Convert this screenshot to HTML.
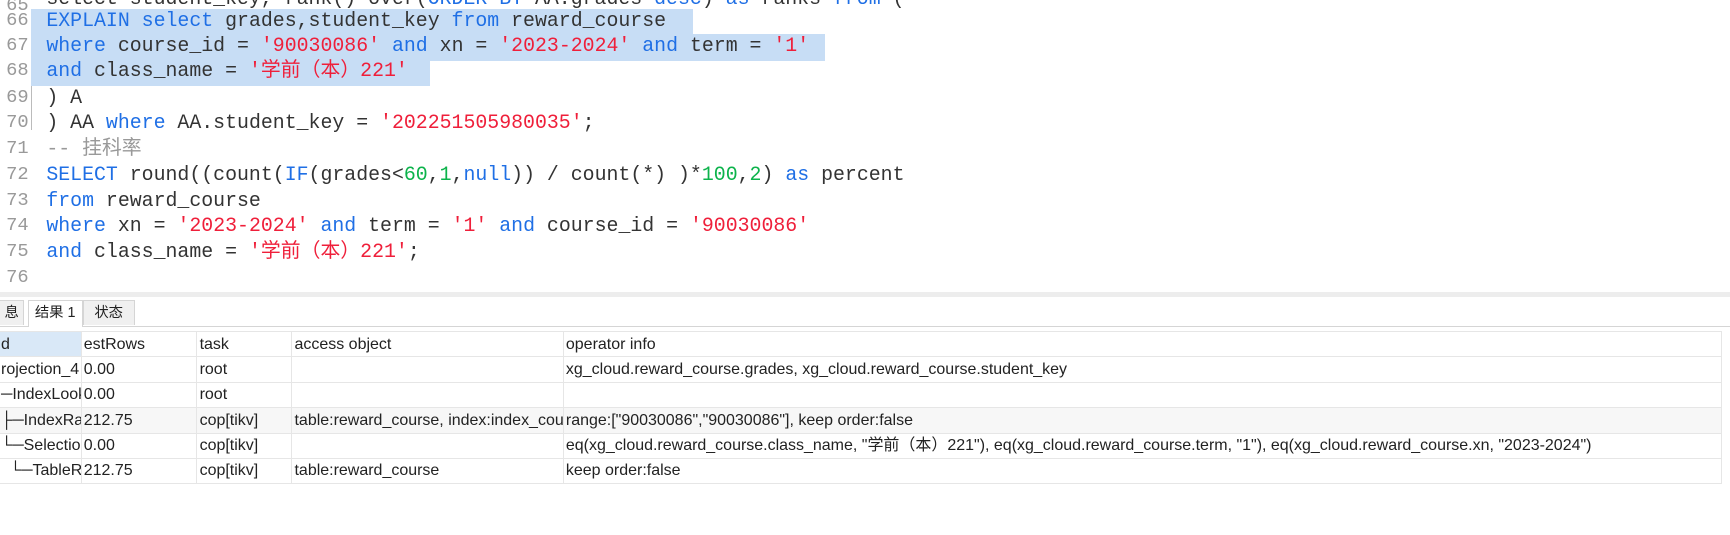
<!DOCTYPE html>
<html><head><meta charset="utf-8"><style>
body{margin:0;width:1730px;height:535px;background:#fff;overflow:hidden;position:relative;font-family:"Liberation Sans","Noto Sans CJK SC",sans-serif}
#w{position:absolute;left:0;top:0;width:1568px;height:485px;zoom:1.1034;overflow:hidden}
.code{position:absolute;left:0;top:0;width:1568px;height:265px}
.ln{position:absolute;left:0;width:26px;text-align:right;color:#999;font:17px/23.3px "Liberation Mono","Noto Sans CJK SC",monospace}
.cl{position:absolute;left:42px;white-space:pre;color:#333;font:18px/23.3px "Liberation Mono","Noto Sans CJK SC",monospace}
.hl{position:absolute;background:#c7ddf5}
.k{color:#1f6fe5}.s{color:#ef1f3a}.n{color:#0cb34b}.c{color:#999}
.sep{position:absolute;left:0;top:265px;width:1568px;height:4px;background:#ededed}
.tab{position:absolute;top:272px;height:23px;font-size:13px;line-height:23px;color:#222;text-align:center;border:1px solid #d5d5d5;border-bottom:none;box-sizing:border-box}
.tl{position:absolute;left:0;top:295px;width:1568px;height:1px;background:#d5d5d5}
table{position:absolute;left:-2px;top:300px;width:1562px;border-collapse:collapse;font-size:14.5px;color:#222;table-layout:fixed}
td{height:23px;line-height:21px;border:1px solid #e6e6e6;padding:0 0 0 2px;white-space:nowrap;overflow:hidden;box-sizing:border-box}
tr.g td{background:#f7f7f7}
</style></head><body><div id="w">
<div class="code">
<div class="hl" style="left:28px;top:8px;width:600px;height:23px"></div>
<div class="hl" style="left:28px;top:31px;width:720px;height:24px"></div>
<div class="hl" style="left:28px;top:55px;width:362px;height:23px"></div>
<div style="position:absolute;left:28px;top:78px;width:1px;height:40px;background:#bbb"></div>
<div class="ln" style="top:-6px">65</div>
<div class="ln" style="top:7px">66</div>
<div class="ln" style="top:30px">67</div>
<div class="ln" style="top:53px">68</div>
<div class="ln" style="top:77px">69</div>
<div class="ln" style="top:100px">70</div>
<div class="ln" style="top:123px">71</div>
<div class="ln" style="top:147px">72</div>
<div class="ln" style="top:170px">73</div>
<div class="ln" style="top:193px">74</div>
<div class="ln" style="top:217px">75</div>
<div class="ln" style="top:240px">76</div>
<div class="cl" style="top:-13px">select student_key, rank() over(<span class="k">ORDER BY</span> AA.grades <span class="k">desc</span>) <span class="k">as</span> ranks <span class="k">from</span> (</div>
<div class="cl" style="top:7px"><span class="k">EXPLAIN select</span> grades,student_key <span class="k">from</span> reward_course</div>
<div class="cl" style="top:30px"><span class="k">where</span> course_id = <span class="s">'90030086'</span> <span class="k">and</span> xn = <span class="s">'2023-2024'</span> <span class="k">and</span> term = <span class="s">'1'</span></div>
<div class="cl" style="top:53px"><span class="k">and</span> class_name = <span class="s">'学前（本）221'</span></div>
<div class="cl" style="top:77px">) A</div>
<div class="cl" style="top:100px">) AA <span class="k">where</span> AA.student_key = <span class="s">'202251505980035'</span>;</div>
<div class="cl" style="top:123px"><span class="c">-- 挂科率</span></div>
<div class="cl" style="top:147px"><span class="k">SELECT</span> round((count(<span class="k">IF</span>(grades&lt;<span class="n">60</span>,<span class="n">1</span>,<span class="k">null</span>)) / count(*) )*<span class="n">100</span>,<span class="n">2</span>) <span class="k">as</span> percent</div>
<div class="cl" style="top:170px"><span class="k">from</span> reward_course</div>
<div class="cl" style="top:193px"><span class="k">where</span> xn = <span class="s">'2023-2024'</span> <span class="k">and</span> term = <span class="s">'1'</span> <span class="k">and</span> course_id = <span class="s">'90030086'</span></div>
<div class="cl" style="top:217px"><span class="k">and</span> class_name = <span class="s">'学前（本）221'</span>;</div>
</div>
<div class="sep"></div>
<div class="tab" style="left:-2px;width:24px;background:#f0f0f0;text-align:right;padding-right:4px">息</div>
<div class="tab" style="left:25px;width:50px;background:#fff;height:24px;z-index:2">结果 1</div>
<div class="tab" style="left:75px;width:47px;background:#f0f0f0">状态</div>
<div class="tl"></div>
<table>
<colgroup><col style="width:75px"><col style="width:105px"><col style="width:86px"><col style="width:246px"><col style="width:1050px"></colgroup>
<tr><td style="background:#d9e8f7">d</td><td>estRows</td><td>task</td><td>access object</td><td>operator info</td></tr>
<tr><td>rojection_4</td><td>0.00</td><td>root</td><td></td><td>xg_cloud.reward_course.grades, xg_cloud.reward_course.student_key</td></tr>
<tr><td>─IndexLookUp</td><td>0.00</td><td>root</td><td></td><td></td></tr>
<tr class="g"><td>├─IndexRangeScan</td><td>212.75</td><td>cop[tikv]</td><td>table:reward_course, index:index_course</td><td>range:["90030086","90030086"], keep order:false</td></tr>
<tr><td>└─Selection</td><td>0.00</td><td>cop[tikv]</td><td></td><td>eq(xg_cloud.reward_course.class_name, "学前（本）221"), eq(xg_cloud.reward_course.term, "1"), eq(xg_cloud.reward_course.xn, "2023-2024")</td></tr>
<tr><td>&nbsp;&nbsp;└─TableRowIDScan</td><td>212.75</td><td>cop[tikv]</td><td>table:reward_course</td><td>keep order:false</td></tr>
</table>
</div></body></html>
